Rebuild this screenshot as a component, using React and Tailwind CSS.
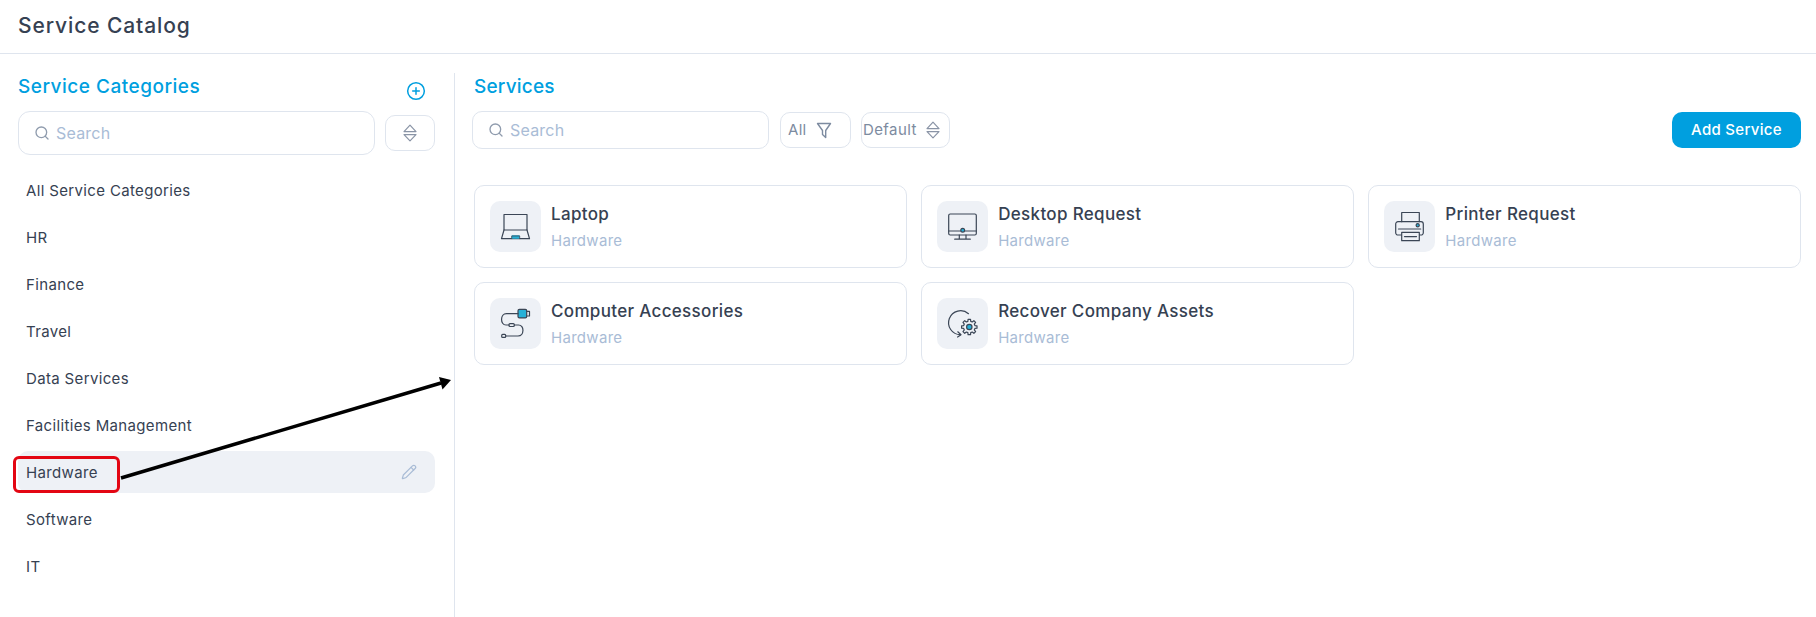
import React from "react";
import { Search, CirclePlus, Pencil } from "lucide-react";

const INK = "#3b4656";
const TEAL = "#27b1d8";

function SortIcon({ className = "" }) {
  return (
    <svg viewBox="0 0 14 18" width="14" height="18" className={className} fill="none" stroke="#8a94a6" strokeWidth="1.2" strokeLinejoin="round">
      <path d="M7 1.2 L13 7.6 H1 Z" />
      <path d="M1 10.6 H13 L7 16.8 Z" />
    </svg>
  );
}

function FunnelIcon() {
  return (
    <svg viewBox="0 0 16 17" width="16" height="17" fill="none" stroke="#7d8ba0" strokeWidth="1.4" strokeLinejoin="round">
      <path d="M1.5 1.5 H14.5 L9.7 8.5 V15.5 L6.5 12.5 V8.5 Z" />
    </svg>
  );
}

function gearPath(cx, cy, rOut, rIn, teeth) {
  const pts = [];
  const step = (Math.PI * 2) / teeth;
  for (let i = 0; i < teeth; i++) {
    const a = i * step - Math.PI / 2;
    const w = step * 0.2;
    [
      [rIn, a - step * 0.32],
      [rOut, a - w],
      [rOut, a + w],
      [rIn, a + step * 0.32],
    ].forEach(([r, t]) => pts.push(`${(cx + r * Math.cos(t)).toFixed(2)} ${(cy + r * Math.sin(t)).toFixed(2)}`));
  }
  return "M" + pts.join(" L") + " Z";
}

function Glyph({ kind }) {
  const common = { fill: "none", stroke: INK, strokeWidth: 1.2, strokeLinecap: "round", strokeLinejoin: "round" };
  return (
    <svg viewBox="0 0 51 51" width="51" height="51" className="block">
      {kind === "laptop" && (
        <g {...common}>
          <rect x="14" y="13.5" width="23" height="15.5" />
          <path d="M14 29 L11.5 37.7 H39.5 L37 29" />
          <rect x="21.7" y="34.2" width="8" height="3.5" fill={TEAL} stroke="none" />
          <path d="M21.7 37.7 V35 H29.7 V37.7" strokeWidth="0.8" />
        </g>
      )}
      {kind === "desktop" && (
        <g {...common}>
          <rect x="11.7" y="13" width="27.6" height="21" rx="1.5" />
          <path d="M11.7 30 H23.5 M28 30 H39.3" />
          <circle cx="25.7" cy="29.2" r="1.9" fill={TEAL} />
          <path d="M22.3 34 V38 M29 34 V38 M17.7 38.2 H33.3" />
        </g>
      )}
      {kind === "printer" && (
        <g {...common}>
          <path d="M17.7 20.7 V11.5 H35.3 V20.7" />
          <path d="M17.7 34 H14 A2.3 2.3 0 0 1 11.7 31.7 V23 A2.3 2.3 0 0 1 14 20.7 H37 A2.3 2.3 0 0 1 39.3 23 V31.7 A2.3 2.3 0 0 1 37 34 H35.3" />
          <path d="M14.5 28 H36.7" />
          <circle cx="33.7" cy="24.2" r="1.6" fill={TEAL} />
          <rect x="17.7" y="31.3" width="17.6" height="8.4" fill="#eef1f6" />
          <path d="M20.5 35.6 H32.5" />
        </g>
      )}
      {kind === "cable" && (
        <g {...common}>
          <rect x="28" y="11.3" width="8.7" height="8.6" rx="1.4" fill={TEAL} />
          <path d="M36.7 13.4 H39.5 V18 H36.7" />
          <path d="M28 15.7 H16.5 C10 15.7 10 27 16 27 H19" />
          <rect x="19" y="25.6" width="5.3" height="2.9" rx="1" />
          <path d="M24.3 27 H28.5 C34.5 27 34.5 38 28 38 H15.7" />
          <rect x="11.7" y="36.4" width="4" height="3" rx="1" />
        </g>
      )}
      {kind === "recover" && (
        <g {...common}>
          <path d="M31.5 15.7 A12 12 0 1 0 23.5 36.7" />
          <path d="M20.8 33.8 L24 36.7 L20.6 39" />
          <path d={gearPath(32.3, 29, 7.8, 5.8, 8)} fill="#eef1f6" />
          <circle cx="32.3" cy="29" r="2.7" fill={TEAL} />
        </g>
      )}
    </svg>
  );
}

function ServiceCard({ name, icon }) {
  return (
    <div className="h-[83px] rounded-[10px] border border-[#dfe5ee] bg-white px-[15px] pt-[15px] flex gap-[10px]">
      <div className="w-[51px] h-[51px] rounded-[10px] bg-[#eef1f6] shrink-0">
        <Glyph kind={icon} />
      </div>
      <div className="pt-[2px]">
        <div className="text-[17px] leading-[22px] font-medium text-[#364152] tracking-[0.33px]">{name}</div>
        <div className="mt-[6px] text-[15px] leading-[20px] text-[#a9bcd6] tracking-[0.3px]">Hardware</div>
      </div>
    </div>
  );
}

const categories = ["All Service Categories", "HR", "Finance", "Travel", "Data Services", "Facilities Management", "Hardware", "Software", "IT"];
const services = [
  ["Laptop", "laptop"],
  ["Desktop Request", "desktop"],
  ["Printer Request", "printer"],
  ["Computer Accessories", "cable"],
  ["Recover Company Assets", "recover"],
];

export default function App() {
  return (
    <div className="relative w-[1816px] h-[617px] overflow-hidden bg-white font-['Inter',sans-serif] text-[#364152]">
      <header className="h-[54px] border-b border-[#dfe5ee] pl-[18px] flex items-center">
        <h1 className="text-[21px] font-medium tracking-[0.9px] text-[#364152] pb-[2px]">Service Catalog</h1>
      </header>

      <div className="flex h-[563px]">
        <aside className="w-[455px] shrink-0 mt-[19px] border-r border-[#dfe5ee] pl-[18px] pr-[19px]">
          <div className="flex justify-between h-[38px]">
            <h2 className="pt-[1px] text-[19px] leading-[26px] font-medium text-[#009fdf] tracking-[0.5px]">Service Categories</h2>
            <CirclePlus size={20} strokeWidth={1.8} color="#009fdf" className="mt-[8px] mr-[9px]" />
          </div>
          <div className="flex items-center gap-[10px]">
            <label className="w-[357px] h-[44px] rounded-[12px] border border-[#dfe5ee] flex items-center pl-[15px] gap-[6px]">
              <Search size={16} color="#8f9bad" />
              <input placeholder="Search" className="w-[250px] outline-none text-[16px] tracking-[0.2px] bg-transparent placeholder:text-[#a9bcd6]" />
            </label>
            <button className="w-[50px] h-[36px] rounded-[10px] border border-[#dfe5ee] flex items-center justify-center">
              <SortIcon />
            </button>
          </div>
          <ul className="mt-[11px]">
            {categories.map((c) => (
              <li key={c} className="h-[47px] flex items-center">
                {c === "Hardware" ? (
                  <div className="relative w-full h-[42px] rounded-[10px] bg-[#eef1f6] flex items-center justify-between pl-[8px] pr-[18px] text-[15px] tracking-[0.35px]">
                    <span className="pt-[4px]">{c}</span>
                    <Pencil size={16} color="#a9bcd6" strokeWidth={1.8} />
                    <div className="absolute -left-[5px] top-[5px] w-[107px] h-[37px] rounded-[6px] border-[3.5px] border-[#e30613]" />
                  </div>
                ) : (
                  <span className="pl-[8px] pt-[4px] text-[15px] tracking-[0.35px]">{c}</span>
                )}
              </li>
            ))}
          </ul>
        </aside>

        <main className="flex-1 pl-[17px] pr-[15px] pt-[19px]">
          <h2 className="pl-[2px] pt-[1px] text-[19px] leading-[26px] font-medium text-[#009fdf] tracking-[0.2px]">Services</h2>
          <div className="mt-[11px] flex items-center">
            <label className="w-[297px] h-[38px] rounded-[10px] border border-[#dfe5ee] flex items-center pl-[15px] gap-[6px]">
              <Search size={16} color="#8f9bad" />
              <input placeholder="Search" className="w-[220px] outline-none text-[16px] tracking-[0.2px] bg-transparent placeholder:text-[#a9bcd6]" />
            </label>
            <button className="ml-[11px] w-[71px] h-[36px] rounded-[10px] border border-[#dfe5ee] flex items-center justify-between pl-[7px] pr-[18px] text-[15px] tracking-[0.3px] text-[#7d8ba0]">
              <span>All</span>
              <FunnelIcon />
            </button>
            <button className="ml-[10px] w-[89px] h-[36px] rounded-[10px] border border-[#dfe5ee] flex items-center justify-between pl-[1px] pr-[9px] text-[15px] tracking-[0.4px] text-[#7d8ba0]">
              <span>Default</span>
              <SortIcon />
            </button>
            <button className="ml-auto w-[129px] h-[36px] rounded-[10px] bg-[#009fdf] text-white text-[15px] tracking-[0.3px] font-medium">Add Service</button>
          </div>
          <div className="mt-[36px] ml-[2px] grid grid-cols-3 gap-x-[14.5px] gap-y-[14px]">
            {services.map(([name, icon]) => (
              <ServiceCard key={name} name={name} icon={icon} />
            ))}
          </div>
        </main>
      </div>

      <svg className="absolute left-0 top-0 pointer-events-none" width="1816" height="617">
        <line x1="121" y1="478" x2="441" y2="383" stroke="#000" strokeWidth="3.5" />
        <polygon points="451,380 439,377 442.5,389.5" fill="#000" />
      </svg>
    </div>
  );
}
